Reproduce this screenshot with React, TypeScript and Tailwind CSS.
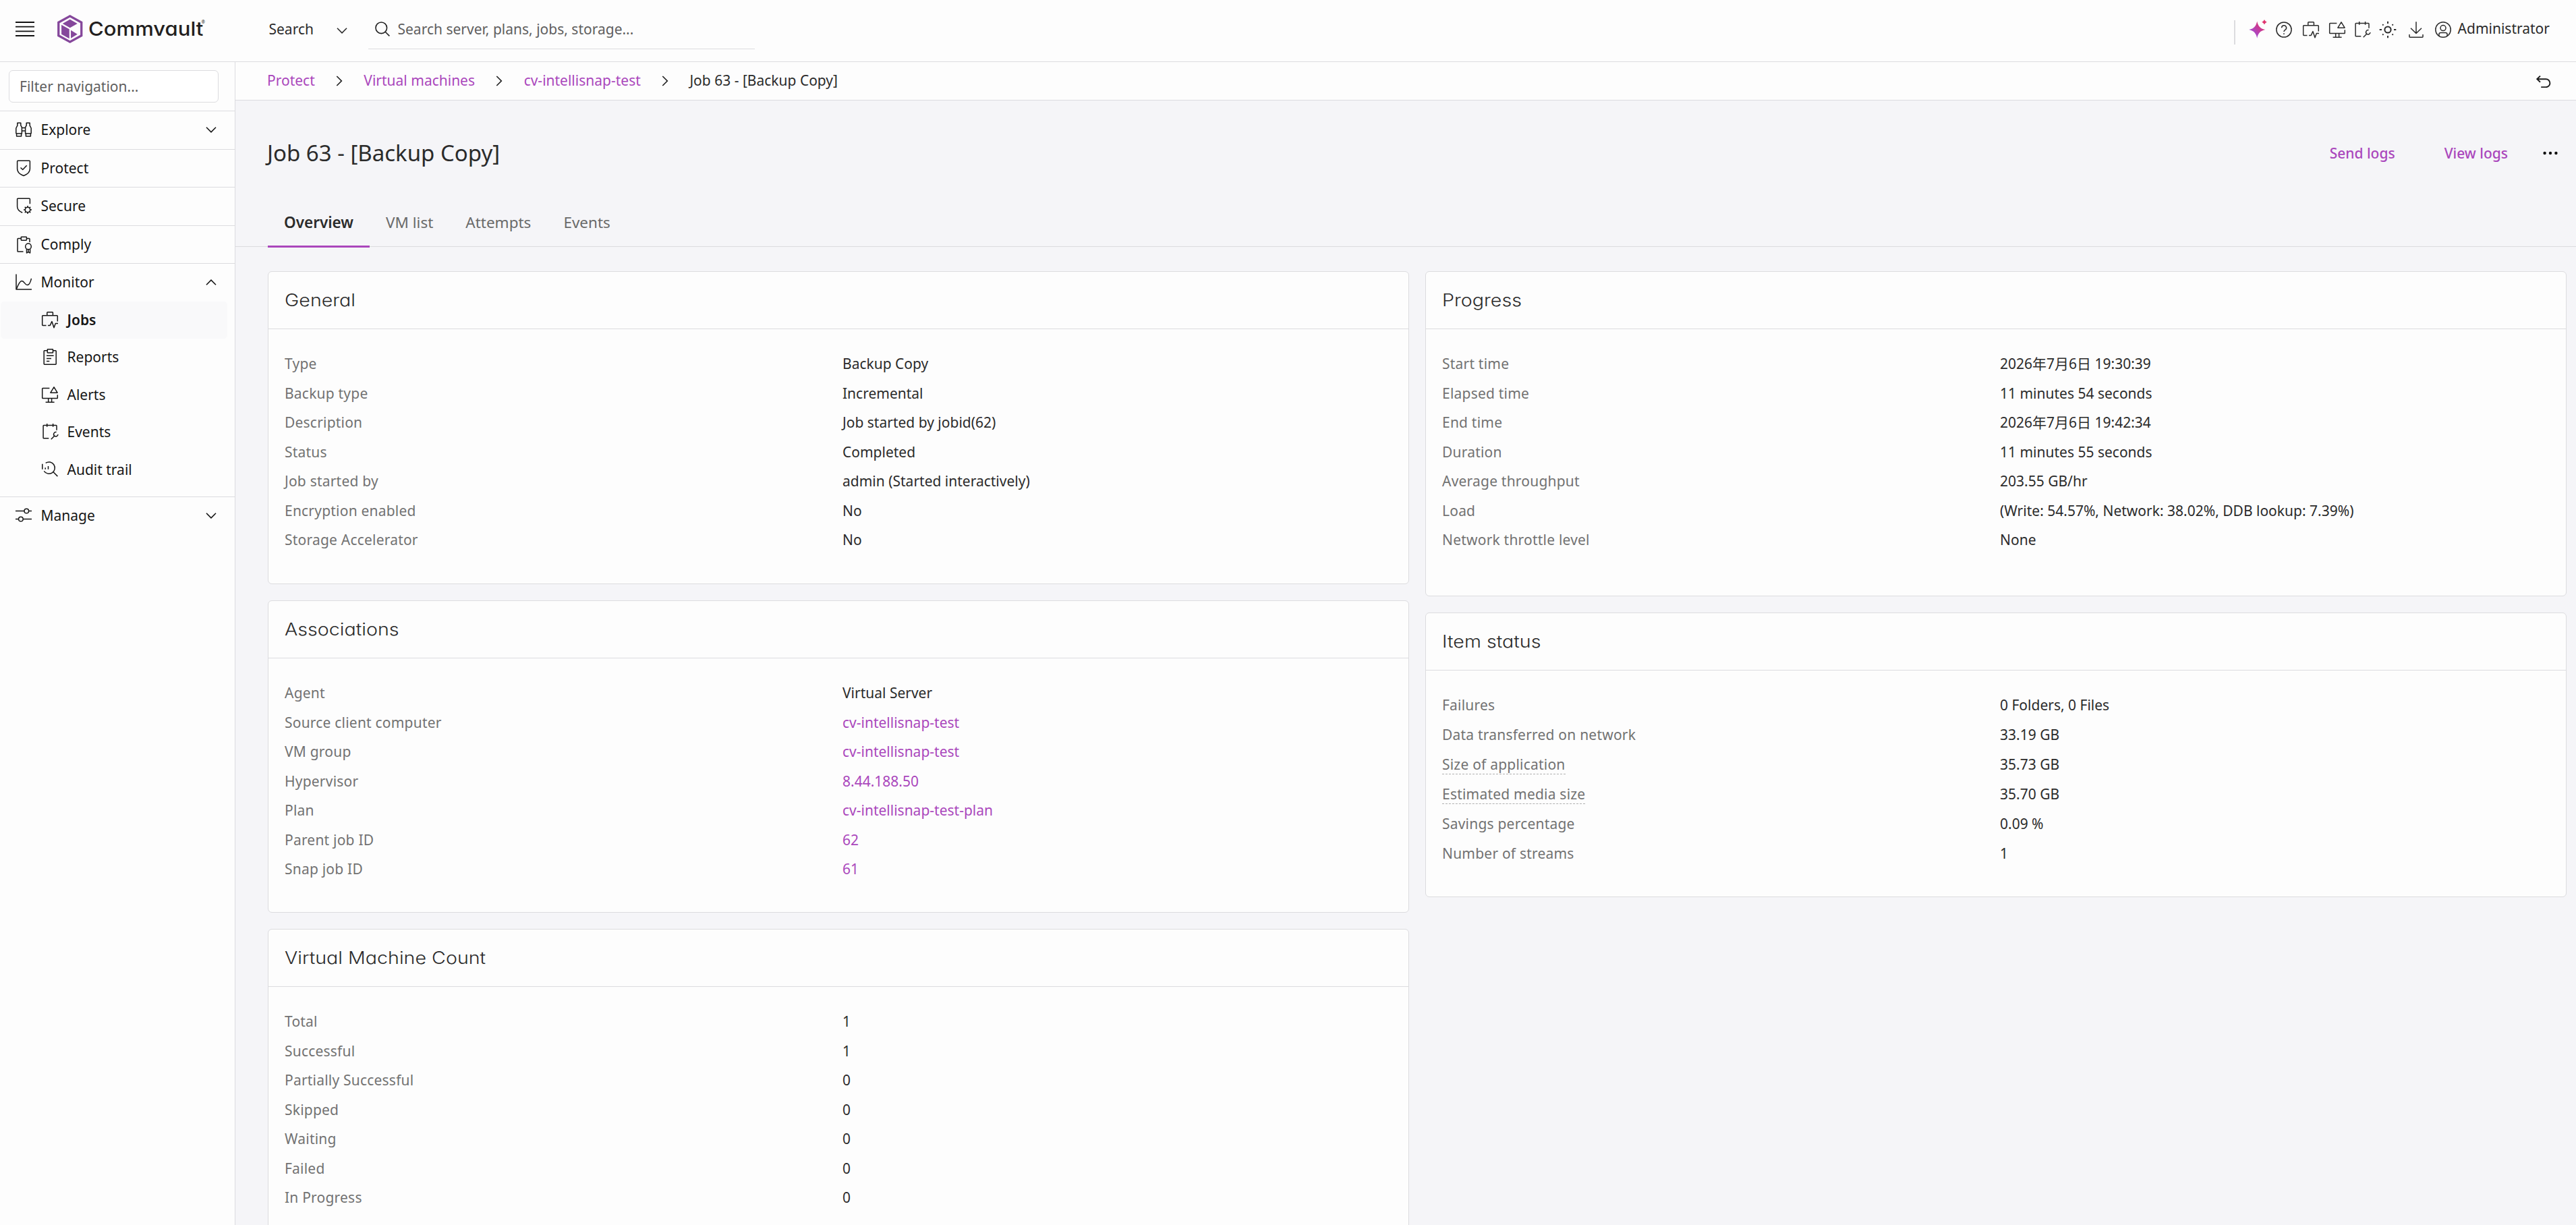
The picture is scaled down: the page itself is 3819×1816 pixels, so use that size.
import type { ReactNode } from "react";

type Row = { label: string; value: string; link?: boolean; hint?: boolean };

const general: Row[] = [
  { label: "Type", value: "Backup Copy" },
  { label: "Backup type", value: "Incremental" },
  { label: "Description", value: "Job started by jobid(62)" },
  { label: "Status", value: "Completed" },
  { label: "Job started by", value: "admin (Started interactively)" },
  { label: "Encryption enabled", value: "No" },
  { label: "Storage Accelerator", value: "No" },
];

const associations: Row[] = [
  { label: "Agent", value: "Virtual Server" },
  { label: "Source client computer", value: "cv-intellisnap-test", link: true },
  { label: "VM group", value: "cv-intellisnap-test", link: true },
  { label: "Hypervisor", value: "8.44.188.50", link: true },
  { label: "Plan", value: "cv-intellisnap-test-plan", link: true },
  { label: "Parent job ID", value: "62", link: true },
  { label: "Snap job ID", value: "61", link: true },
];

const vmCount: Row[] = [
  { label: "Total", value: "1" },
  { label: "Successful", value: "1" },
  { label: "Partially Successful", value: "0" },
  { label: "Skipped", value: "0" },
  { label: "Waiting", value: "0" },
  { label: "Failed", value: "0" },
  { label: "In Progress", value: "0" },
];

const progress: Row[] = [
  { label: "Start time", value: "2026年7月6日 19:30:39" },
  { label: "Elapsed time", value: "11 minutes 54 seconds" },
  { label: "End time", value: "2026年7月6日 19:42:34" },
  { label: "Duration", value: "11 minutes 55 seconds" },
  { label: "Average throughput", value: "203.55 GB/hr" },
  { label: "Load", value: "(Write: 54.57%, Network: 38.02%, DDB lookup: 7.39%)" },
  { label: "Network throttle level", value: "None" },
];

const itemStatus: Row[] = [
  { label: "Failures", value: "0 Folders, 0 Files" },
  { label: "Data transferred on network", value: "33.19 GB" },
  { label: "Size of application", value: "35.73 GB", hint: true },
  { label: "Estimated media size", value: "35.70 GB", hint: true },
  { label: "Savings percentage", value: "0.09 %" },
  { label: "Number of streams", value: "1" },
];

function Icon({ children, className = "" }: { children: ReactNode; className?: string }) {
  return (
    <svg
      viewBox="0 0 24 24"
      fill="none"
      stroke="currentColor"
      strokeWidth="1.5"
      strokeLinejoin="round"
      className={`size-6 shrink-0 overflow-visible ${className}`}
    >
      {children}
    </svg>
  );
}

const ExploreIcon = () => (
  <Icon>
    <path d="M2.8 2.2h5v3.6l1.6 3V18H1.2l-.4-.6V10l2-3.8z" />
    <path d="M1.6 18v4h7v-4" />
    <path d="M16.2 2.2h5v4l2 3.8v7.4l-.4.6h-8.2V8.8l1.6-3z" />
    <path d="M15.4 18v4h7v-4" />
    <path d="M9.4 9.5h5.2M9.4 14h5.2" />
  </Icon>
);

const ProtectIcon = () => (
  <Icon>
    <path d="M3.6 1.2h16.8a1 1 0 0 1 1 1v11c0 5-4 8.3-9.4 10.3-5.4-2-9.4-5.3-9.4-10.3v-11a1 1 0 0 1 1-1z" />
    <path d="M7.5 11.5l3.2 3 6-6.3" />
  </Icon>
);

const SecureIcon = () => (
  <Icon>
    <path d="M21.4 9.3V2.2a1 1 0 0 0-1-1H3.6a1 1 0 0 0-1 1v11c0 4 3 7.1 7.6 9" />
    <circle cx="18" cy="18" r="3.7" />
    <path d="M18 12v2.3M18 21.7V24M12 18h2.3M21.7 18H24M13.8 13.8l1.6 1.6M20.6 20.6l1.6 1.6M13.8 22.2l1.6-1.6M20.6 15.4l1.6-1.6" />
  </Icon>
);

const ComplyIcon = () => (
  <Icon>
    <path d="M11.5 23H3.8a.8.8 0 0 1-.8-.8V4.4a.8.8 0 0 1 .8-.8h4.5M16.4 3.6h3.8a.8.8 0 0 1 .8.8V9" />
    <rect x="8.3" y="1.2" width="8.1" height="5" rx=".6" />
    <circle cx="19" cy="15.4" r="4.3" />
    <path d="M16.5 19v6l2.5-1.4 2.6 1.4v-6M19 19.7v4" />
  </Icon>
);

const MonitorIcon = () => (
  <Icon>
    <path d="M1 .5V23h23" />
    <path d="M1.4 22.5C3.5 17 6 10.4 9.3 10.4c3.7 0 4.7 6.1 8 6.1 3.2 0 5-4.5 6.2-9.7" />
  </Icon>
);

const JobsIcon = ({ className = "" }) => (
  <Icon className={className}>
    <path d="M6.5 20.4h-5a.8.8 0 0 1-.8-.8v-13a.8.8 0 0 1 .8-.8h21a.8.8 0 0 1 .8.8v8" />
    <path d="M7.8 5.7V1.6a.8.8 0 0 1 .8-.8h7a.8.8 0 0 1 .8.8v4.1" />
    <path d="M9 20.4h3.2l2.7-5.8 3.1 9.2 2.3-6.4H24" />
  </Icon>
);

const ReportsIcon = () => (
  <Icon>
    <path d="M8.3 2.7H4a.8.8 0 0 0-.8.8v19a.8.8 0 0 0 .8.8h16.4a.8.8 0 0 0 .8-.8v-19a.8.8 0 0 0-.8-.8h-4" />
    <rect x="8.3" y=".8" width="8.2" height="5.2" rx=".6" />
    <path d="M7 10.2h10.6M7 14.4h7M7 18.6h4.3" />
  </Icon>
);

const AlertsIcon = ({ className = "" }) => (
  <Icon className={className}>
    <path d="M11.4 2.4H1.5a.8.8 0 0 0-.8.8v13.6a.8.8 0 0 0 .8.8h21a.8.8 0 0 0 .8-.8v-4.6" />
    <path d="M18 .8l5.1 8.4H12.9z" />
    <path d="M9.7 17.6v5.3M14.6 17.6v5.3M5.6 23.2h13" />
  </Icon>
);

const EventsIcon = ({ className = "" }) => (
  <Icon className={className}>
    <path d="M10.3 21.7H2.9a.8.8 0 0 1-.8-.8V3.2a.8.8 0 0 1 .8-.8h18.3a.8.8 0 0 1 .8.8v6.6" />
    <path d="M7.7 0v4.8M16.6 0v4.8" />
    <path d="M13.7 23.3l5-5" />
    <path d="M21.6 12.6a3.3 3.3 0 0 0-3 5.6 3.3 3.3 0 0 0 5.4-2.2" />
  </Icon>
);

const AuditIcon = () => (
  <Icon>
    <path d="M5.7 2.4a8.7 8.7 0 1 1-2.4 12" />
    <path d="M17 15.8l6.4 6.3M.8 3.7v8M5.2 9.2v2.5M9.5 7v4.7" />
  </Icon>
);

const ManageIcon = () => (
  <Icon>
    <path d="M0 5.5h13M19.6 5.5H24M0 17.5h4.5M11.2 17.5H24" />
    <circle cx="16.3" cy="5.5" r="3.3" />
    <circle cx="7.9" cy="17.5" r="3.3" />
  </Icon>
);

const HelpIcon = ({ className = "" }) => (
  <Icon className={className}>
    <circle cx="12" cy="12" r="11.1" />
    <path d="M8.6 9.3a3.5 3.5 0 1 1 5.1 3c-1.2.7-1.7 1.2-1.7 2.7" />
    <path d="M12 17.2v1.7" />
  </Icon>
);

const SunIcon = ({ className = "" }) => (
  <Icon className={className}>
    <circle cx="12" cy="12" r="4.6" strokeWidth="2" />
    <path
      strokeWidth="1.9"
      d="M12-.3v3.3M12 21v3.3M-.3 12H3M21 12h3.3M4.2 4.2l1.3 1.3M18.5 18.5l1.3 1.3M4.2 19.8l1.3-1.3M18.5 5.5l1.3-1.3"
    />
  </Icon>
);

const DownloadIcon = ({ className = "" }) => (
  <Icon className={className}>
    <path d="M12 .2v17M4 9.8l8 7.7 8-7.7M2 19v3.5a.8.8 0 0 0 .8.8h18.4a.8.8 0 0 0 .8-.8V19" />
  </Icon>
);

const UserIcon = ({ className = "" }) => (
  <Icon className={className}>
    <circle cx="12" cy="12" r="11.2" />
    <circle cx="12" cy="9.6" r="4" />
    <path d="M5.9 21v-2.2a2.4 2.4 0 0 1 2.4-2.4h7.4a2.4 2.4 0 0 1 2.4 2.4V21" />
  </Icon>
);

function Sparkle({ className = "" }) {
  return (
    <svg viewBox="0 0 27 28" className={`h-7 w-[27px] shrink-0 ${className}`}>
      <defs>
        <linearGradient id="spark" x1="0" y1="1" x2="1" y2="0">
          <stop offset=".15" stopColor="#9a4fe0" />
          <stop offset=".85" stopColor="#e0306e" />
        </linearGradient>
      </defs>
      <path
        fill="url(#spark)"
        d="M12.2 2.5c1.5 7.3 4.5 10.8 12 12.6-7.5 1.8-10.5 5.3-12 12.6-1.5-7.3-4.5-10.8-12-12.6 7.5-1.8 10.5-5.3 12-12.6z"
      />
      <path fill="#e0356f" d="M23 0c1 2.1 1.7 2.8 3.8 3.8C24.700 4.800 24 5.500 23 7.600c-1-2.100-1.700-2.800-3.800-3.800C21.300 2.800 22 2.100 23 0z" />
    </svg>
  );
}

function Chevron({ up = false, className = "" }) {
  return (
    <svg viewBox="0 0 16 9" fill="none" stroke="currentColor" strokeWidth="1.6" className={`h-[9px] w-4 shrink-0 ${className}`}>
      <path d={up ? "M1 8.2l7-7 7 7" : "M1 .8l7 7 7-7"} />
    </svg>
  );
}

function Logo() {
  return (
    <div className="flex items-center">
      <svg viewBox="0 0 112 126" className="h-[42px] w-[37.5px] shrink-0" fill="#85479b">
        <path fillRule="evenodd" d="M56 0l56 31v64l-56 31L0 95V31zM56 11L10 36.5v53L56 115l46-25.5v-53z" />
        <path d="M56 20l33 19-33 19-33-19z" />
        <path d="M18 44l35 20v42L18 86z" />
        <path d="M60 68l29 18-29 18z" />
      </svg>
      <div className="relative ml-[8px] w-[178px] text-[#231f20]">
        <span className="inline-block origin-left scale-x-[1.09] font-['Inter'] text-[28.5px] leading-[42px] font-medium [font-feature-settings:'cv11']">
          Commvault
        </span>
        <span className="absolute top-[8px] left-[168px] text-[6.5px] leading-none">®</span>
      </div>
    </div>
  );
}

function Header() {
  return (
    <header className="flex h-[92px] shrink-0 items-center border-b border-[#dcdcdf] bg-[#fdfdfd] text-[#2b2b2b]">
      <div className="flex h-[86px] items-center self-start">
        <svg viewBox="0 0 28 24" className="ml-[23px] h-6 w-7" stroke="#111" strokeWidth="1.8">
          <path d="M0 2h28M0 8.7h28M0 15.3h28M0 22h28" />
        </svg>
        <div className="ml-[34px]">
          <Logo />
        </div>
      </div>
      <div className="mb-[5px] ml-[90px] flex items-center">
        <span className="w-[100px]">Search</span>
        <Chevron className="mt-[4px]" />
      </div>
      <div className="ml-[31px] flex h-[73px] w-[573px] items-center self-start border-b border-[#dcdcdf] pt-[14px] pl-[10px]">
        <svg viewBox="0 0 22 22" fill="none" stroke="#222" strokeWidth="1.6" className="mb-[1px] size-[22px] shrink-0">
          <circle cx="9.3" cy="9.3" r="8.3" />
          <path d="M15.2 15.2l6.2 6.2" />
        </svg>
        <span className="ml-[12px] text-[#5f5f5f]">Search server, plans, jobs, storage...</span>
      </div>
      <div className="ml-auto flex items-center pr-[39px] pb-[4px]">
        <div className="mt-[9px] h-9 w-[2px] bg-[#dcdcdf]" />
        <Sparkle className="mb-[2px] ml-[20px]" />
        <HelpIcon className="ml-[13px]" />
        <JobsIcon className="ml-[15.5px]" />
        <AlertsIcon className="ml-[15px]" />
        <EventsIcon className="ml-[13px]" />
        <SunIcon className="ml-[14px]" />
        <DownloadIcon className="ml-[18px]" />
        <UserIcon className="ml-[16px]" />
        <span className="mb-[3px] ml-[10px]">Administrator</span>
      </div>
    </header>
  );
}

function NavItem({ icon, label, chevron }: { icon: ReactNode; label: string; chevron?: "up" | "down" }) {
  return (
    <div className="flex h-[56.5px] items-center border-t border-[#dcdcdf] pr-[27px] pb-[2px] pl-[23px]">
      {icon}
      <span className="ml-[13.5px] flex-1">{label}</span>
      {chevron && <Chevron up={chevron === "up"} />}
    </div>
  );
}

function SubItem({ icon, label, active = false }: { icon: ReactNode; label: string; active?: boolean }) {
  return (
    <div
      className={`mr-[11px] ml-[1px] flex h-[55.5px] items-center rounded-[5px] pb-[2px] pl-[61px] ${active ? "bg-[#f9f9fa] font-semibold" : ""}`}
    >
      {icon}
      <span className="ml-[13.5px]">{label}</span>
    </div>
  );
}

function Sidebar() {
  return (
    <nav className="w-[349px] shrink-0 border-r border-[#dcdcdf] bg-[#fdfdfd] text-[#161616]">
      <div className="h-[72.3px] pt-[12px] pl-[13px]">
        <div className="flex h-[48px] w-[311px] items-center rounded-[6px] border border-[#dcdcdf] bg-white pl-[15px] text-[#5f5f5f]">
          Filter navigation...
        </div>
      </div>
      <NavItem icon={<ExploreIcon />} label="Explore" chevron="down" />
      <NavItem icon={<ProtectIcon />} label="Protect" />
      <NavItem icon={<SecureIcon />} label="Secure" />
      <NavItem icon={<ComplyIcon />} label="Comply" />
      <NavItem icon={<MonitorIcon />} label="Monitor" chevron="up" />
      <div className="pb-[12px]">
        <SubItem icon={<JobsIcon />} label="Jobs" active />
        <SubItem icon={<ReportsIcon />} label="Reports" />
        <SubItem icon={<AlertsIcon />} label="Alerts" />
        <SubItem icon={<EventsIcon />} label="Events" />
        <SubItem icon={<AuditIcon />} label="Audit trail" />
      </div>
      <NavItem icon={<ManageIcon />} label="Manage" chevron="down" />
    </nav>
  );
}

function Breadcrumb() {
  const crumbs = ["Protect", "Virtual machines", "cv-intellisnap-test"];
  return (
    <div className="flex h-[57px] items-center border-b border-[#dcdcdf] bg-[#fdfdfd] pr-[37px] pb-[2px] pl-[47px]">
      {crumbs.map((crumb) => (
        <div key={crumb} className="flex items-center">
          <a className="text-[#aa47bc]">{crumb}</a>
          <svg viewBox="0 0 10 16" fill="none" stroke="#222" strokeWidth="1.7" className="mx-[31.3px] mt-[2px] h-4 w-[10px]">
            <path d="M1.3 1l7 7-7 7" />
          </svg>
        </div>
      ))}
      <span className="text-[#2b2b2b]">Job 63 - [Backup Copy]</span>
      <svg viewBox="0 0 22 18" fill="none" stroke="#1c1c1c" strokeWidth="1.9" className="mt-[4px] ml-auto h-[18px] w-[22px]">
        <path d="M6 .6L1.2 5.2 6 9.800M1.2 5.2h13.2a6 6 0 0 1 0 12H7.2" />
      </svg>
    </div>
  );
}

function Card({ title, rows, className = "", rowClass = "h-[43.5px]" }: { title: string; rows: Row[]; className?: string; rowClass?: string }) {
  return (
    <section className={`rounded-[6px] border border-[#dcdcdf] bg-[#fdfdfd] ${className}`}>
      <div className="flex h-[85px] items-center border-b border-[#dcdcdf] pl-[24px]">
        <h2 className="origin-left scale-x-[1.145] font-['Inter'] text-[25px] font-[350] text-[#2b2b2b] [font-feature-settings:'cv11']">{title}</h2>
      </div>
      <div className="pt-[29.3px] pl-[24px]">
        {rows.map((row) => (
          <div key={row.label} className={`flex items-center ${rowClass}`}>
            <div className="w-[827px] tracking-[0.01em] text-[#727272]">
              <span className={row.hint ? "border-b border-dashed border-[#b0b0b0]" : ""}>{row.label}</span>
            </div>
            <div className={row.link ? "text-[#aa47bc]" : "text-[#2b2b2b]"}>{row.value}</div>
          </div>
        ))}
      </div>
    </section>
  );
}

export default function App() {
  return (
    <div className="flex h-screen w-full flex-col overflow-hidden bg-[#f5f5f8] font-['Noto_Sans','Noto_Sans_CJK_SC',sans-serif] text-[21px] leading-[30px]">
      <Header />
      <div className="flex min-h-0 flex-1">
        <Sidebar />
        <main className="min-w-0 flex-1">
          <Breadcrumb />
          <div className="flex h-[156px] items-center pr-[27px] pl-[47px]">
            <h1 className="text-[33px] text-[#2b2b2b]">Job 63 - [Backup Copy]</h1>
            <div className="ml-auto flex items-center font-medium text-[#aa47bc]">
              <a>Send logs</a>
              <a className="ml-[73px]">View logs</a>
              <svg viewBox="0 0 22 6" fill="#111" className="ml-[52px] h-[6px] w-[22px]">
                <circle cx="2.6" cy="3" r="2.2" />
                <circle cx="11" cy="3" r="2.2" />
                <circle cx="19.4" cy="3" r="2.2" />
              </svg>
            </div>
          </div>
          <div className="flex h-[61px] border-b border-[#dcdcdf] pl-[48px] text-[22.5px] text-[#6a6a6a]">
            <div className="h-[62px] border-b-[3px] border-[#aa47bc] px-6 pt-[10px] font-semibold text-[#2b2b2b]">Overview</div>
            <div className="px-6 pt-[10px]">VM list</div>
            <div className="px-6 pt-[10px]">Attempts</div>
            <div className="px-6 pt-[10px]">Events</div>
          </div>
          <div className="mt-[36px] flex items-start gap-[24px] pr-[14px] pl-[48px]">
            <div className="flex flex-1 flex-col gap-[24px]">
              <Card title="General" rows={general} className="h-[464px]" />
              <Card title="Associations" rows={associations} className="h-[463px]" />
              <Card title="Virtual Machine Count" rows={vmCount} className="h-[500px]" />
            </div>
            <div className="flex flex-1 flex-col gap-[24px]">
              <Card title="Progress" rows={progress} className="h-[482px]" />
              <Card title="Item status" rows={itemStatus} className="h-[422px]" rowClass="h-[44px]" />
            </div>
          </div>
        </main>
      </div>
    </div>
  );
}
